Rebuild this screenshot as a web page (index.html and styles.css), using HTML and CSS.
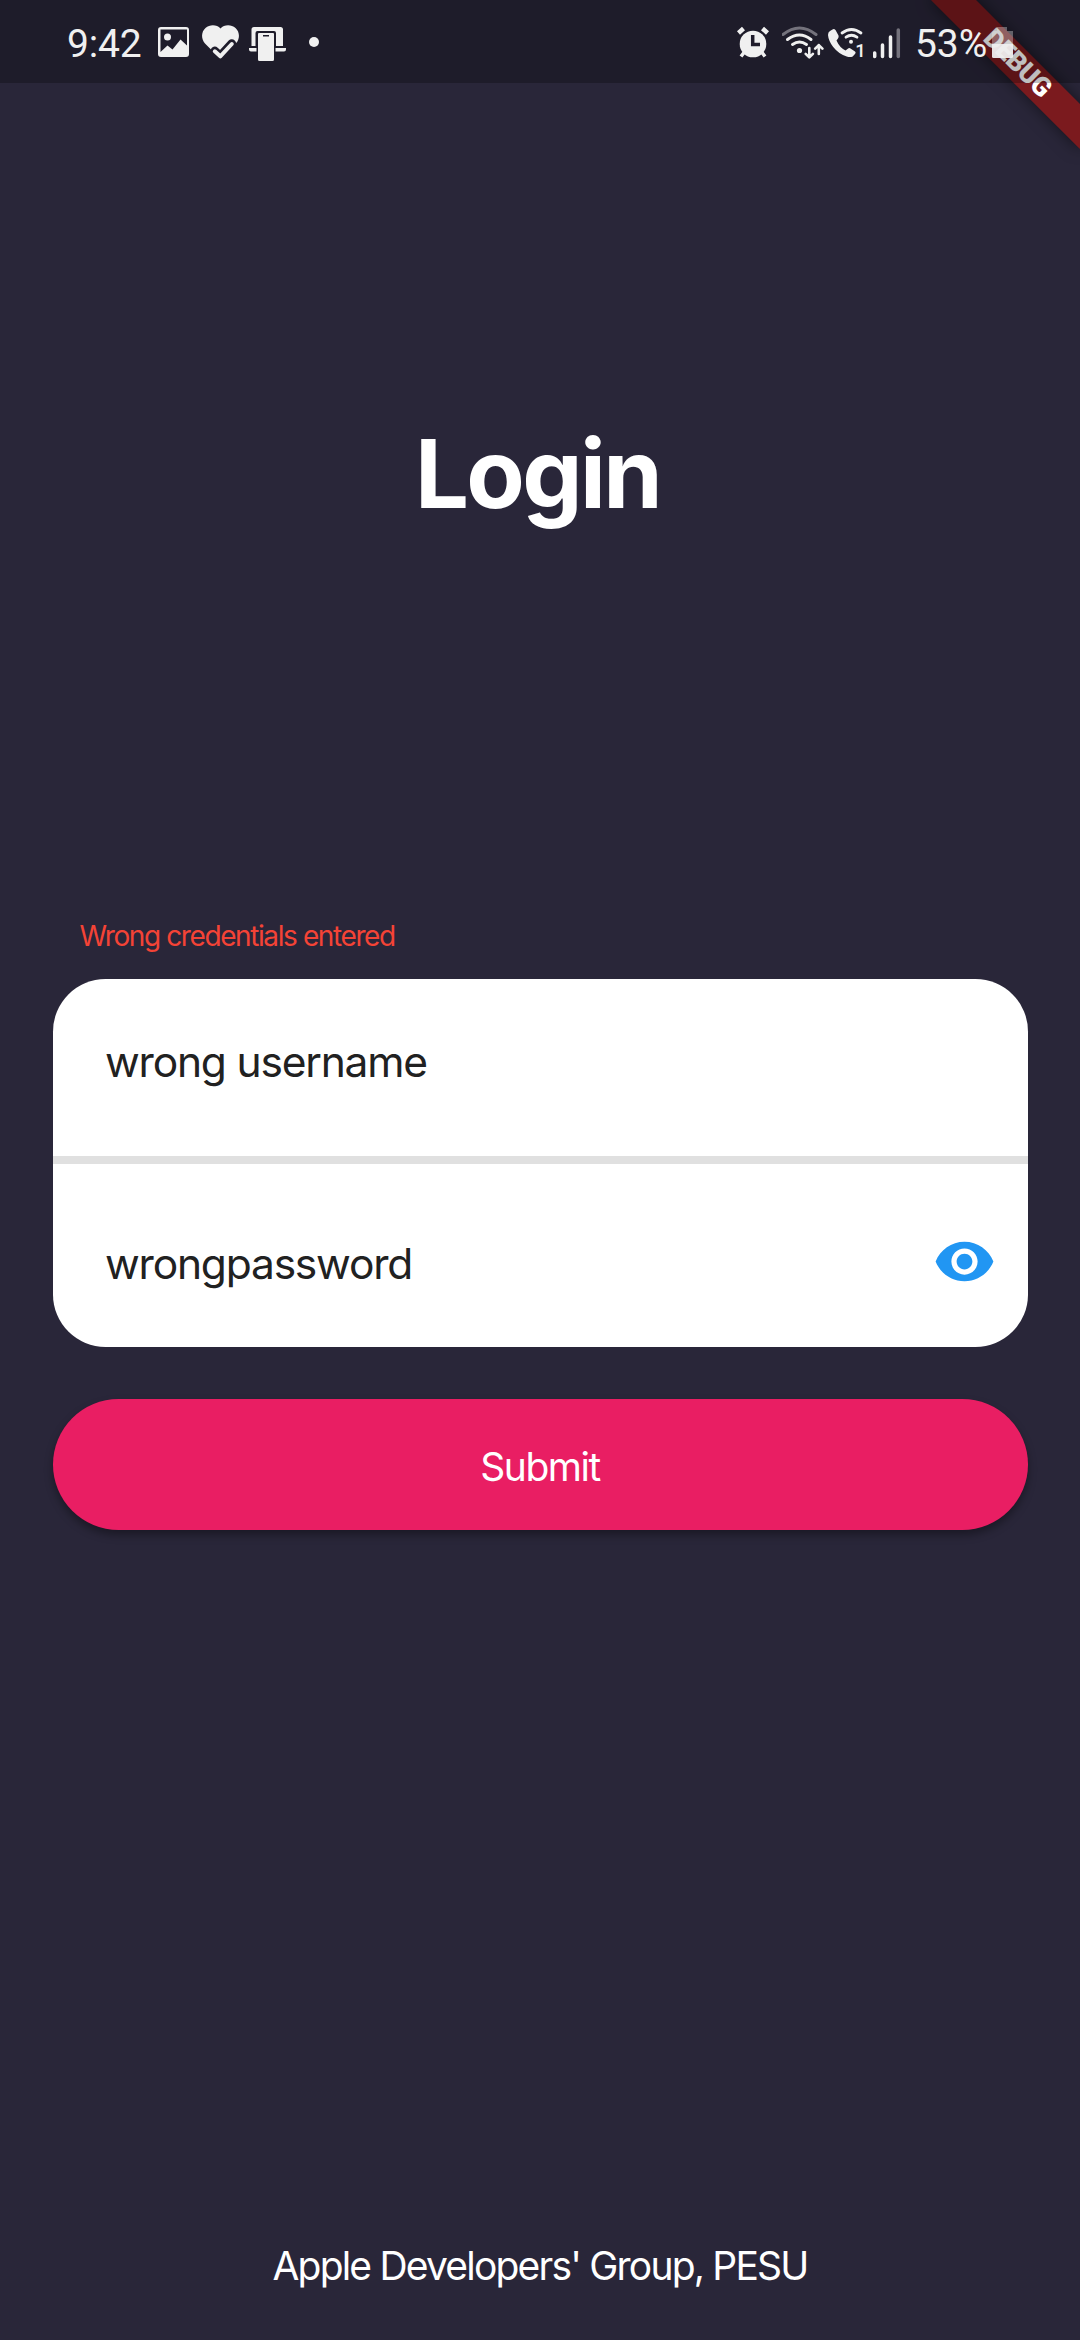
FILE: index.html
```html
<!DOCTYPE html>
<html lang="en">
<head>
<meta charset="utf-8">
<title>Login</title>
<link rel="stylesheet" href="styles.css">
</head>
<body>
<div class="screen">
  <div class="banner">DEBUG</div>

  <header class="status">
    <span class="clock">9:42</span>
    <svg class="icon photo" width="31" height="83" viewBox="158 0 31 83">
      <path fill-rule="evenodd" d="M161 27h25q3 0 3 3v24q0 3-3 3h-25q-3 0-3-3V30q0-3 3-3zM160.500 29.500V52l7-6.500 5 4 8-10 6.500 6V29.500z"/>
      <circle cx="167.500" cy="37" r="3.500"/>
    </svg>
    <svg class="icon heart" width="37" height="83" viewBox="202 0 37 83">
      <path d="M220.500 28.500C217 24.500 210 24 205.500 28 201 32 201 39 205 43.500L220.500 59 236 43.500C240 39 240 32 235.500 28 231 24 224 24.500 220.500 28.500z"/>
      <path class="gap" d="M212 51l8.500 9 17-17-5-1-12 13z"/>
      <path class="cut" d="M214.800 50.800l5.500 5 11.500-12.300" stroke-width="8.500" stroke-linecap="round" stroke-linejoin="round"/>
      <path class="line" d="M214.800 51.300l5.500 5 11.500-12.300" stroke-width="4"/>
    </svg>
    <svg class="icon device" width="37" height="83" viewBox="249 0 37 83">
      <path d="M251.500 46V29.500q0-2.500 2.500-2.500h26.500q2.500 0 2.500 2.500V46h-7V33q0-2-2-2h-16.500q-2 0-2 2V46zM249 48h7.500v3.500H251q-2 0-2-2zM275.500 48h10.500v1.500q0 2-2 2h-8.500z"/>
      <path fill-rule="evenodd" d="M259 33h14q1 0 1 1v25.500q0 1.500-1.500 1.500h-13q-1.500 0-1.500-1.500V34q0-1 1-1zM263 35v1.500h6V35z"/>
    </svg>
    <svg class="icon more" width="12" height="83" viewBox="308 0 12 83"><circle cx="314" cy="42" r="5"/></svg>

    <svg class="icon alarm" width="34" height="83" viewBox="736 0 34 83">
      <circle cx="753" cy="44" r="13.300"/>
      <path class="line" d="M738.500 33l5-4.500M767.500 33l-5-4.500" stroke-width="4.500"/>
      <path class="line" d="M744 52.500l-3 4M762 52.500l3 4" stroke-width="3.500"/>
      <path class="hand" d="M752.700 35v9.500h7.300" stroke-width="3.500"/>
    </svg>
    <svg class="icon wifi" width="42" height="83" viewBox="782 0 42 83">
      <path class="line dim" d="M783 34.500q16.500-13 33 0" stroke-width="3"/>
      <path class="line" d="M787.500 39.500q12-9 23.500 0M792.500 44.500q7-5 14 0" stroke-width="3"/>
      <circle cx="799.500" cy="50.500" r="2.600"/>
      <path class="line" d="M809.300 48v9M805.700 53.800l3.600 3.600 3.600-3.600M818.800 54v-9M815.200 48.700l3.600-3.600 3.600 3.600" stroke-width="2.600"/>
    </svg>
    <svg class="icon call" width="38" height="83" viewBox="827 0 38 83">
      <path d="M832.500 29.500q1.500-1 3 .5l3 5.500q.500 1.500-.500 3l-1.500 2q3 7 9 10l3-2.200q1-.6 2 .1l4.500 3q1.200 1 .2 2.400l-2.500 2.700q-2.500 1-6 0-8-2.500-13.500-9.500-4.700-6-5.200-12 0-3 2-4z"/>
      <path class="line" d="M842 33q9.500-7 19 0M846 37.200q5.500-3.800 11 0" stroke-width="2.800"/>
      <circle cx="851" cy="41.700" r="2"/>
      <text class="sim" x="855.300" y="57.200">1</text>
    </svg>
    <svg class="icon signal" width="28" height="83" viewBox="873 0 28 83">
      <path class="line" d="M874.700 53v3.500M882.500 45v11.500M890.500 37v19.500" stroke-width="3.500"/>
      <path class="line dim" d="M898.300 30v26.500" stroke-width="3.500"/>
    </svg>
    <span class="percent">53%</span>
    <svg class="icon battery" width="22" height="83" viewBox="992 0 22 83">
      <path fill-opacity=".35" d="M997 27h10v4h6v13h-21V33q0-2 2-2h3z"/>
      <path fill-opacity=".94" d="M992 44h21v12.500q0 1.500-1.500 1.500h-18q-1.500 0-1.500-1.500z"/>
    </svg>
  </header>

  <main class="content">
    <h1 class="title">Login</h1>
    <p class="error">Wrong credentials entered</p>
    <div class="card">
      <div class="field username"><span>wrong username</span></div>
      <div class="field password">
        <span>wrongpassword</span>
        <svg class="eye" viewBox="0 0 24 24"><path d="M12 4.500C7 4.500 2.730 7.610 1 12c1.730 4.390 6 7.500 11 7.500s9.270-3.110 11-7.500c-1.730-4.390-6-7.500-11-7.500zM12 17c-2.760 0-5-2.240-5-5s2.240-5 5-5 5 2.240 5 5-2.240 5-5 5zm0-8c-1.660 0-3 1.340-3 3s1.340 3 3 3 3-1.340 3-3-1.340-3-3-3z"/></svg>
      </div>
    </div>
    <button class="submit">Submit</button>
  </main>

  <footer class="footer">Apple Developers' Group, PESU</footer>
</div>
</body>
</html>
```
FILE: styles.css
```css
* { box-sizing: border-box; }
body { margin: 0; background: #292639; font-family: Inter, "Liberation Sans", sans-serif; }
.screen {
  position: relative;
  display: flex;
  flex-direction: column;
  width: 1080px;
  height: 2340px;
  overflow: hidden;
  background: #292639;
  color: #fff;
}

/* Corner ribbon, lies under the translucent status bar */
.banner {
  position: absolute;
  left: 1080px;
  top: 0;
  width: 210px;
  height: 31.5px;
  transform-origin: 0 0;
  transform: rotate(45deg) translate(-105px, 73.5px);
  background: #7b1a1e;
  box-shadow: 0 0 16px rgba(0, 0, 0, .5);
  font: 900 26.8px/31.5px Roboto, sans-serif;
  letter-spacing: -.5px;
  text-indent: 1px;
  text-align: center;
}

.status {
  position: relative;
  z-index: 1;
  display: flex;
  flex: none;
  height: 83px;
  padding-left: 67px;
  background: rgba(0, 0, 0, .25);
  color: #f0f0f0;
  font: 400 39px/89px Roboto, sans-serif;
}
.clock { width: 91px; letter-spacing: -.2px; white-space: nowrap; }
.percent { width: 76px; margin-left: 14px; letter-spacing: -.1px; white-space: nowrap; }
.icon { display: block; flex: none; fill: #f0f0f0; }
.line { fill: none; stroke: #f0f0f0; stroke-linecap: round; stroke-linejoin: round; }
.alarm .line { stroke-linecap: butt; }
.cut, .hand { fill: none; stroke: #1f1c2b; }
.gap { fill: #1f1c2b; }
.dim { stroke: #74727c; }
.sim { font: 500 18.500px Roboto, sans-serif; }
.heart { margin-left: 13px; }
.device { margin-left: 10px; }
.more { margin-left: 22px; }
.alarm { margin-left: 416px; }
.wifi { margin-left: 12px; }
.call { margin-left: 3px; }
.signal { margin-left: 8px; }
.battery { margin-left: 1px; }

.content { display: flex; flex-direction: column; padding: 330px 52.5px 0; }
.title {
  margin: 0;
  padding-right: 5px;
  font-size: 95.5px;
  font-weight: 700;
  line-height: 120px;
  letter-spacing: -2.6px;
  text-align: center;
}
.error {
  margin: 383px 0 0;
  padding-left: 27px;
  color: #f44336;
  font-size: 28px;
  line-height: 40px;
  letter-spacing: -1.4px;
}
.card {
  height: 367.5px;
  margin-top: 23px;
  border-radius: 52.5px;
  overflow: hidden;
  background: #fff;
  color: #212121;
  font-size: 42.5px;
  line-height: 60px;
  letter-spacing: -1.2px;
}
.field { display: flex; justify-content: space-between; padding-left: 52.5px; padding-right: 31.5px; }
.username { height: 185px; padding-top: 53px; border-bottom: 8px solid #e0e0e0; }
.password { padding-top: 66px; }
.password span { padding-top: 4px; }
.eye { width: 63px; height: 63px; fill: #2196f3; }
.submit {
  height: 131px;
  margin-top: 52.5px;
  padding: 5px 0 0;
  border: 0;
  border-radius: 66px;
  background: #e91e63;
  box-shadow: 0 5px 8px rgba(0, 0, 0, .35);
  color: #fff;
  font: 400 39px/60px Inter, sans-serif;
  letter-spacing: -1.5px;
}
.footer {
  margin: auto 0 44px;
  font-size: 39px;
  line-height: 60px;
  letter-spacing: -1.8px;
  text-align: center;
}
```
